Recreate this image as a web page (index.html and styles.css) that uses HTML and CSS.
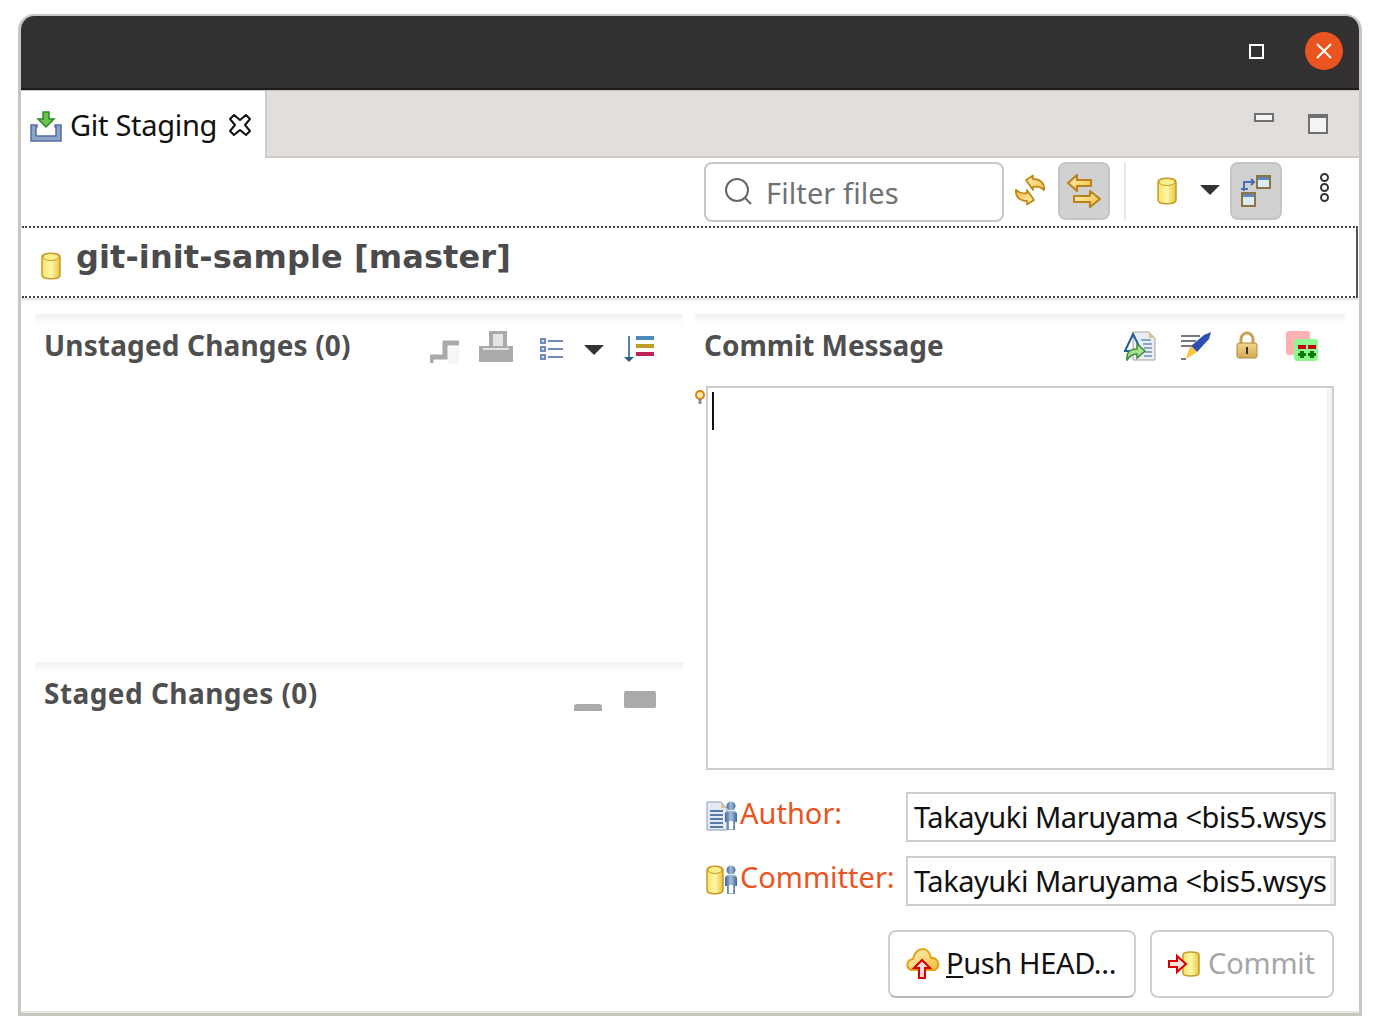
FILE: index.html
```html
<!DOCTYPE html>
<html lang="en">
<head>
    <meta charset="UTF-8">
    <title>Git Staging</title>
    <link rel="stylesheet" href="styles.css">
</head>
<body>
    <svg class="defs" width="0" height="0">
        <defs>
            <linearGradient id="gold" x1="0" x2="1" y1="0" y2="0">
                <stop offset="0" stop-color="#f7e36a"/>
                <stop offset="0.5" stop-color="#fff7a8"/>
                <stop offset="1" stop-color="#e8c53c"/>
            </linearGradient>
            <linearGradient id="amber" x1="0" x2="1" y1="0" y2="1">
                <stop offset="0" stop-color="#fff3c0"/>
                <stop offset="1" stop-color="#f5bc3c"/>
            </linearGradient>
            <linearGradient id="lock" x1="0" x2="0" y1="0" y2="1">
                <stop offset="0" stop-color="#f0d48c"/>
                <stop offset="1" stop-color="#d4aa58"/>
            </linearGradient>
            <linearGradient id="person" x1="0" x2="1" y1="0" y2="0">
                <stop offset="0" stop-color="#3d6597"/>
                <stop offset="0.5" stop-color="#a9c0dc"/>
                <stop offset="1" stop-color="#3d6597"/>
            </linearGradient>
        </defs>
    </svg>
    <div class="window">
        <div class="titlebar">
            <span class="win-max"></span>
            <span class="win-close">
                <svg width="18" height="18" viewBox="0 0 18 18"><path d="M2 2 16 16M16 2 2 16" stroke="#fff" stroke-width="2"/></svg>
            </span>
        </div>

        <div class="tabbar">
            <div class="tab">
                <svg class="tab-icon" width="32" height="31" viewBox="0 0 32 31">
                    <path d="M1 14h6v2H6v9h20v-9h-1v-2h6v16H1z" fill="#8fa3c8" stroke="#4f6ea5" stroke-width="1.500"/>
                    <path d="M13 1h6v7h5l-8 8-8-8h5z" fill="#6cc24a" stroke="#2a8a2a" stroke-width="1.500"/>
                </svg>
                <span class="tab-label">Git Staging</span>
                <svg class="tab-close" width="22" height="22" viewBox="0 0 22 22">
                    <path d="M1 5 5 1 11 6 17 1 21 5 16 11 21 17 17 21 11 16 5 21 1 17 6 11z" fill="#fff" stroke="#111" stroke-width="2" stroke-linejoin="round"/>
                </svg>
            </div>
            <div class="tab-actions">
                <span class="view-min"></span>
                <span class="view-max"></span>
            </div>
        </div>

        <div class="toolbar">
            <div class="filter">
                <svg width="30" height="30" viewBox="0 0 30 30"><circle cx="14" cy="13" r="11" fill="none" stroke="#666" stroke-width="2"/><path d="M22 21l6 6" stroke="#666" stroke-width="2"/></svg>
                <span>Filter files</span>
            </div>
            <span class="tool tool-sync">
                <svg width="30" height="32" viewBox="-1 -1 30 32">
                    <path id="sync-half" d="M10 5 17 .5V4C24 4 29 8 28 15 25 12 22 11 17 12v3z" fill="url(#amber)" stroke="#c08a1e" stroke-width="1.800" stroke-linejoin="round"/>
                    <use href="#sync-half" transform="rotate(180 14 15)"/>
                </svg>
            </span>
            <span class="tool tool-on">
                <svg width="34" height="34" viewBox="0 0 34 34">
                    <path d="M1 9 10 1v5h14v6H10v5z" fill="url(#amber)" stroke="#b8811c" stroke-width="2" stroke-linejoin="round"/>
                    <path d="M33 25 23 33v-5H7v-6h16v-5z" fill="url(#amber)" stroke="#b8811c" stroke-width="2" stroke-linejoin="round"/>
                </svg>
            </span>
            <span class="tool-sep"></span>
            <span class="tool tool-repo">
                <svg width="20" height="28" viewBox="0 0 20 28"><path d="M1 5v18c0 5 18 5 18 0V5c0-5-18-5-18 0z" fill="url(#gold)" stroke="#c69a2a" stroke-width="1.500"/><ellipse cx="10" cy="5" rx="8" ry="3.500" fill="#fbef8a" stroke="#c69a2a"/></svg>
            </span>
            <span class="caret tool-caret"></span>
            <span class="tool tool-on">
                <svg width="32" height="32" viewBox="0 0 32 32">
                    <rect x="17" y="1" width="13" height="12" fill="#dcebf8" stroke="#8c7440" stroke-width="2"/><rect x="18" y="2" width="11" height="3" fill="#5c86c0"/>
                    <rect x="2" y="18" width="13" height="13" fill="#dcebf8" stroke="#8c7440" stroke-width="2"/><rect x="3" y="19" width="11" height="3" fill="#5c86c0"/>
                    <path d="M1 14h7M4 16V7h9M11 4l3 3-3 3" fill="none" stroke="#4a6eb0" stroke-width="2"/>
                </svg>
            </span>
            <span class="dots"><i></i><i></i><i></i></span>
        </div>

        <div class="repo-row">
            <svg width="20" height="28" viewBox="0 0 20 28"><path d="M1 5v18c0 5 18 5 18 0V5c0-5-18-5-18 0z" fill="url(#gold)" stroke="#c69a2a" stroke-width="1.500"/><ellipse cx="10" cy="5" rx="8" ry="3.500" fill="#fbef8a" stroke="#c69a2a"/></svg>
            <h1>git-init-sample [master]</h1>
        </div>

        <div class="panes">
            <div class="col-left">
                <section class="section section-unstaged">
                    <div class="section-head">
                        <h2 class="title-unstaged">Unstaged Changes (0)</h2>
                        <div class="section-tools">
                            <svg class="step" width="30" height="26" viewBox="0 0 30 26"><path d="M1 24v-6h14V4h14" fill="none" stroke="#aaa" stroke-width="5"/><path d="M18 8h11v17H18z" fill="#f6f6f6"/></svg>
                            <svg class="gap-a" width="34" height="32" viewBox="0 0 34 32"><path d="M10 0h18v15h6v16H0V15h10z" fill="#aaa"/><path d="M14 3h10v12H14zM4 17h26v2H4z" fill="#e4e4e4"/></svg>
                            <svg class="gap-b" width="24" height="24" viewBox="0 0 24 24"><g fill="#6e8cc0"><rect x="0" y="1" width="6" height="6"/><rect x="0" y="9" width="6" height="6"/><rect x="0" y="17" width="6" height="6"/><rect x="8" y="3" width="15" height="2"/><rect x="8" y="11" width="15" height="2"/><rect x="8" y="19" width="15" height="2"/></g><g fill="#dbe4f2"><rect x="2" y="3" width="2" height="2"/><rect x="2" y="11" width="2" height="2"/><rect x="2" y="19" width="2" height="2"/></g></svg>
                            <span class="caret section-caret"></span>
                            <svg class="gap-c" width="30" height="28" viewBox="0 0 30 28"><path d="M5 1v22" stroke="#4d86b5" stroke-width="2"/><path d="M0 22h10l-5 5z" fill="#2d5f85"/><rect x="12" y="1" width="18" height="4" fill="#4d8ab8"/><rect x="12" y="9" width="18" height="4" fill="#bb9f22"/><rect x="12" y="17" width="18" height="4" fill="#bc2454"/></svg>
                        </div>
                    </div>
                </section>
                <section class="section">
                    <div class="section-head section-head-staged">
                        <h2 class="title-staged">Staged Changes (0)</h2>
                        <div class="section-tools">
                            <span class="staged-a"></span>
                            <span class="staged-b"></span>
                        </div>
                    </div>
                </section>
            </div>

            <section class="section col-right">
                <div class="section-head">
                    <h2 class="title-commit">Commit Message</h2>
                    <div class="section-tools commit-tools">
                        <svg width="32" height="30" viewBox="0 0 32 30">
                            <path d="M9 1h16l6 6v22H9z" fill="#e8eef6" stroke="#a8a48c"/><path d="M25 1v6h6z" fill="#d8c898"/><path d="M17 9h10M19 13h9M20 17h8M20 21h8M20 25h8" stroke="#6e8cb8" stroke-width="1.500"/>
                            <path d="M1 20 9 3l7 14M0 20h6" fill="none" stroke="#1f5c9c" stroke-width="2"/>
                            <path d="M3 29c-1-8 3-11 10-11v-5l8 7-8 7v-4c-4 0-7 1-10 6z" fill="#a8e090" stroke="#3f8f3f" stroke-width="1.500"/>
                        </svg>
                        <svg width="32" height="30" viewBox="0 0 32 30">
                            <path d="M1 5h19M1 10h15M1 15h11M1 28h5" stroke="#777" stroke-width="2"/>
                            <path d="M24 4 31 1 29 8 17 21 11 15z" fill="#2f4fb0"/>
                            <path d="M11 15l6 6-11 7c1-4 2-9 5-13z" fill="#f7c840"/>
                        </svg>
                        <svg class="lock" width="22" height="28" viewBox="0 0 22 28">
                            <path d="M5 13V8a6 6 0 0 1 12 0v5" fill="none" stroke="#c8a050" stroke-width="3"/>
                            <rect x="1" y="12" width="20" height="15" rx="2" fill="url(#lock)" stroke="#b08a3c"/>
                            <path d="M11 16v7" stroke="#3a3020" stroke-width="2"/>
                        </svg>
                        <svg width="32" height="30" viewBox="0 0 32 30">
                            <rect x="0" y="0" width="24" height="24" rx="3" fill="#ffb0b0"/>
                            <rect x="8" y="8" width="24" height="22" rx="3" fill="#90f890"/>
                            <rect x="12" y="14" width="8" height="4" fill="#c00010"/><rect x="22" y="14" width="8" height="4" fill="#c00010"/>
                            <path d="M14 20h4v2h2v3h-2v2h-4v-2h-2v-3h2zM24 20h4v2h2v3h-2v2h-4v-2h-2v-3h2z" fill="#0a7a0a"/>
                        </svg>
                    </div>
                </div>
                <div class="message-wrap">
                    <svg class="hint" width="12" height="16" viewBox="0 0 12 16"><circle cx="6" cy="6" r="4" fill="#ffe9a8" stroke="#d9820f" stroke-width="2"/><path d="M6 10v5" stroke="#8a8a9a" stroke-width="3"/></svg>
                    <div class="message"><span class="cursor"></span></div>
                </div>
                <div class="person-row">
                    <div class="person-label">
                        <svg width="32" height="30" viewBox="0 0 32 30">
                            <path d="M1 1h14l6 6v22H1z" fill="#e4eaf3" stroke="#8a9ab8"/><path d="M15 1v6h6z" fill="#d8c898"/><path d="M4 10h13M4 14h13M4 18h13M4 22h13M4 26h13" stroke="#5a7aa8" stroke-width="2"/>
                            <circle cx="25" cy="5" r="4.500" fill="url(#person)"/><path d="M19 13c0-2 2-3 6-3s6 1 6 3v8h-2v8h-8v-8h-2z" fill="url(#person)"/><path d="M23 20h4v8h-4z" fill="#fff"/>
                        </svg>
                        <label>Author:</label>
                    </div>
                    <div class="person-input"><span>Takayuki Maruyama &lt;bis5.wsys</span></div>
                </div>
                <div class="person-row">
                    <div class="person-label">
                        <svg width="32" height="30" viewBox="0 0 32 30">
                            <path d="M1 5v20c0 5 16 5 16 0V5c0-5-16-5-16 0z" fill="url(#gold)" stroke="#c69a2a" stroke-width="1.500"/><ellipse cx="9" cy="5" rx="7" ry="3.500" fill="#fbef8a" stroke="#c69a2a"/>
                            <circle cx="25" cy="5" r="4.500" fill="url(#person)"/><path d="M19 13c0-2 2-3 6-3s6 1 6 3v8h-2v8h-8v-8h-2z" fill="url(#person)"/><path d="M23 20h4v8h-4z" fill="#fff"/>
                        </svg>
                        <label>Committer:</label>
                    </div>
                    <div class="person-input"><span>Takayuki Maruyama &lt;bis5.wsys</span></div>
                </div>
                <div class="actions">
                    <button class="btn btn-push">
                        <svg width="34" height="32" viewBox="0 0 34 32">
                            <path d="M5 22C-1 19 1 12 7 11 8 5 12 1 17 1c4 0 7 4 8 9 7-1 10 8 4 12z" fill="url(#amber)" stroke="#e3a318" stroke-width="2"/>
                            <path d="M16 12l8 8h-5v10h-6V20H8z" fill="#ffd8d8" stroke="#d40000" stroke-width="2"/>
                        </svg>
                        <span><u>P</u>ush HEAD...</span>
                    </button>
                    <button class="btn btn-commit" disabled>
                        <svg width="32" height="26" viewBox="0 0 32 26">
                            <path d="M15 4v18c0 4 16 4 16 0V4c0-4-16-4-16 0z" fill="url(#gold)" stroke="#c69a2a" stroke-width="1.500"/>
                            <path d="M1 10h8V5l9 8-9 8v-5H1z" fill="#ffe0e0" stroke="#d40000" stroke-width="2"/>
                        </svg>
                        <span>Commit</span>
                    </button>
                </div>
            </section>
        </div>
    </div>
</body>
</html>
```

FILE: styles.css
```css
html, body {
    margin: 0;
    padding: 0;
    background: white;
}

body {
    padding: 14px 18px 0;
    font-family: 'Noto Sans', sans-serif;
}

.defs {
    position: absolute;
}

.window {
    width: 1344px;
    height: 1002px;
    box-sizing: border-box;
    border: 3px solid #c9c6c2;
    border-top-width: 2px;
    border-radius: 16px 16px 0 0;
    background: white;
    display: flex;
    flex-direction: column;
    overflow: hidden;
}

.titlebar {
    height: 74px;
    flex: none;
    box-sizing: border-box;
    background: #323031;
    border-bottom: 2px solid #1d1c1c;
    margin: 0 -3px;
    display: flex;
    align-items: center;
    justify-content: flex-end;
    padding: 0 19px 2px 0;
}

.win-max {
    width: 15px;
    height: 15px;
    box-sizing: border-box;
    border: 2px solid white;
    margin-right: 41px;
}

.win-close {
    width: 38px;
    height: 38px;
    border-radius: 50%;
    background: #e95420;
    display: flex;
    align-items: center;
    justify-content: center;
}

.tabbar {
    height: 68px;
    flex: none;
    box-sizing: border-box;
    background: #e1dedb;
    border-top: 1px solid #c9c6c2;
    border-bottom: 2px solid #cfccc7;
    display: flex;
    justify-content: space-between;
}

.tab {
    width: 246px;
    height: 67px;
    box-sizing: border-box;
    background: white;
    border-right: 2px solid #cfccc7;
    padding: 0 0 0 9px;
    display: flex;
    align-items: center;
}

.tab-icon {
    margin-top: 4px;
    flex: none;
}

.tab-label {
    font-size: 29px;
    color: #111;
    margin-left: 8px;
    letter-spacing: -0.3px;
}

.tab-close {
    margin-left: 12px;
}

.tab-actions {
    display: flex;
    align-items: flex-start;
    gap: 34px;
    padding: 22px 31px 0 0;
}

.view-min {
    width: 20px;
    height: 9px;
    box-sizing: border-box;
    border: 2px solid #6f6f6f;
    background: #f4f4f4;
}

.view-max {
    width: 20px;
    height: 20px;
    box-sizing: border-box;
    border: 2px solid #6f6f6f;
    border-top-width: 4px;
    margin-top: 1px;
    background: #f4f4f4;
}

.toolbar {
    height: 68px;
    flex: none;
    box-sizing: border-box;
    display: flex;
    align-items: flex-start;
    padding: 4px 0 0 683px;
}

.filter {
    width: 300px;
    height: 60px;
    box-sizing: border-box;
    border: 2px solid #c8c8c8;
    border-radius: 8px;
    margin-right: 2px;
    display: flex;
    align-items: center;
    padding-left: 17px;
    font-size: 29px;
    color: #6f7275;
    letter-spacing: 0.1px;
}

.filter span {
    margin-left: 13px;
}

.tool {
    width: 52px;
    height: 58px;
    box-sizing: border-box;
    display: flex;
    align-items: center;
    justify-content: center;
}

.tool-on {
    background: #d1d1d1;
    border: 2px solid #c4c4c4;
    border-radius: 8px;
}

.tool-sync {
    margin-top: -1px;
    padding-right: 4px;
}

.tool-sep {
    width: 2px;
    height: 58px;
    background: #e8e8e8;
    margin: 0 15px 0 14px;
}

.caret {
    width: 0;
    height: 0;
    border-left: 10px solid transparent;
    border-right: 10px solid transparent;
    border-top: 10px solid #333;
}

.tool-caret {
    margin: 23px 10px 0 7px;
}

.dots {
    display: flex;
    flex-direction: column;
    gap: 1px;
    margin: 11px 0 0 38px;
}

.dots i {
    width: 9px;
    height: 9px;
    box-sizing: border-box;
    border: 2px solid #333;
    border-radius: 50%;
}

.repo-row {
    height: 72px;
    flex: none;
    box-sizing: border-box;
    margin: 0 1px;
    border-top: 2px dotted #444;
    border-bottom: 2px dotted #444;
    border-right: 2px solid #555;
    display: flex;
    align-items: flex-end;
    padding: 0 0 4px 19px;
    box-shadow: 0 2px 0 #e4e4e4;
}

.repo-row svg {
    margin-bottom: 12px;
}

.repo-row h1 {
    margin: 0 0 15px 15px;
    font-family: 'DejaVu Sans', sans-serif;
    font-weight: bold;
    font-size: 32px;
    line-height: 40px;
    letter-spacing: 0.1px;
    color: #4b4b4d;
}

.panes {
    flex: 1;
    box-sizing: border-box;
    display: grid;
    grid-template-columns: 648px 650px;
    column-gap: 12px;
    padding: 16px 0 0 14px;
    border-bottom: 2px solid #e6e6e6;
    min-height: 0;
}

.col-left {
    display: flex;
    flex-direction: column;
}

.section {
    border-top: 1px solid #f4f4f4;
    background: linear-gradient(#f3f3f3, white 10px);
}

.section-unstaged {
    height: 347px;
    flex: none;
}

.section-head {
    height: 60px;
    box-sizing: border-box;
    display: flex;
    justify-content: space-between;
    padding: 8px 0 0 9px;
}

h2 {
    margin: 0;
    font-size: 28px;
    line-height: 44px;
    font-weight: bold;
    color: #4f4f50;
}

.title-unstaged {
    letter-spacing: 0.15px;
}

.title-staged {
    letter-spacing: 0.45px;
}

.title-commit {
    letter-spacing: -0.05px;
}

.section-tools {
    display: flex;
    align-items: flex-start;
    padding: 8px 29px 0 0;
}

.step {
    margin-top: 8px;
}

.gap-a {
    margin-left: 19px;
}

.gap-b {
    margin: 6px 0 0 27px;
}

.section-caret {
    margin: 14px 0 0 20px;
}

.gap-c {
    margin: 4px 0 0 20px;
}

.section-head-staged .section-tools {
    padding-right: 27px;
}

.staged-a {
    width: 28px;
    height: 7px;
    background: #aaa;
    border-radius: 3px 3px 0 0;
    margin-top: 25px;
}

.staged-b {
    width: 32px;
    height: 17px;
    background: #aaa;
    border-radius: 2px;
    margin: 12px 0 0 22px;
}

.section-tools.commit-tools {
    gap: 24px;
    padding: 8px 27px 0 0;
}

.lock {
    margin-right: 4px;
}

.message-wrap {
    position: relative;
    height: 384px;
    margin: 11px 11px 0 11px;
}

.hint {
    position: absolute;
    left: -12px;
    top: 3px;
}

.message {
    height: 100%;
    box-sizing: border-box;
    border: 2px solid #cdcdcd;
    box-shadow: inset -5px 0 0 #f2f2f2;
    padding: 4px 0 0 4px;
}

.cursor {
    display: block;
    width: 2px;
    height: 38px;
    background: #111;
}

.person-row {
    height: 50px;
    display: flex;
    margin: 22px 9px 0 11px;
}

.person-row + .person-row {
    margin-top: 14px;
}

.person-label {
    width: 200px;
    flex: none;
    display: flex;
    align-items: flex-start;
    padding-top: 6px;
    box-sizing: border-box;
    font-size: 29px;
    color: #e95420;
}

.person-label svg {
    margin-top: 3px;
    margin-right: 2px;
    flex: none;
}

.person-label label {
    line-height: 30px;
    white-space: nowrap;
}

.person-input {
    flex: 1;
    box-sizing: border-box;
    border: 2px solid #cdcdcd;
    box-shadow: inset -4px 0 0 #f0f0f0;
    padding: 0 6px 2px;
    overflow: hidden;
    display: flex;
    align-items: center;
    font-size: 29px;
    color: #111;
    white-space: nowrap;
    letter-spacing: -0.45px;
}

.actions {
    display: flex;
    justify-content: flex-end;
    gap: 14px;
    margin: 24px 11px 0 0;
}

.btn {
    height: 68px;
    box-sizing: border-box;
    background: white;
    border: 2px solid #cfcfcf;
    border-radius: 8px;
    display: flex;
    align-items: center;
    font-family: inherit;
    font-size: 29px;
    color: #111;
    letter-spacing: -0.35px;
    padding: 0;
}

.btn span {
    margin-bottom: 4px;
}

.btn-push {
    width: 248px;
    padding-left: 16px;
    gap: 6px;
    border-bottom-color: #b8b8b8;
}

.btn-commit {
    width: 184px;
    padding-left: 16px;
    gap: 8px;
    color: #a4a6a8;
    letter-spacing: -0.2px;
}
```
